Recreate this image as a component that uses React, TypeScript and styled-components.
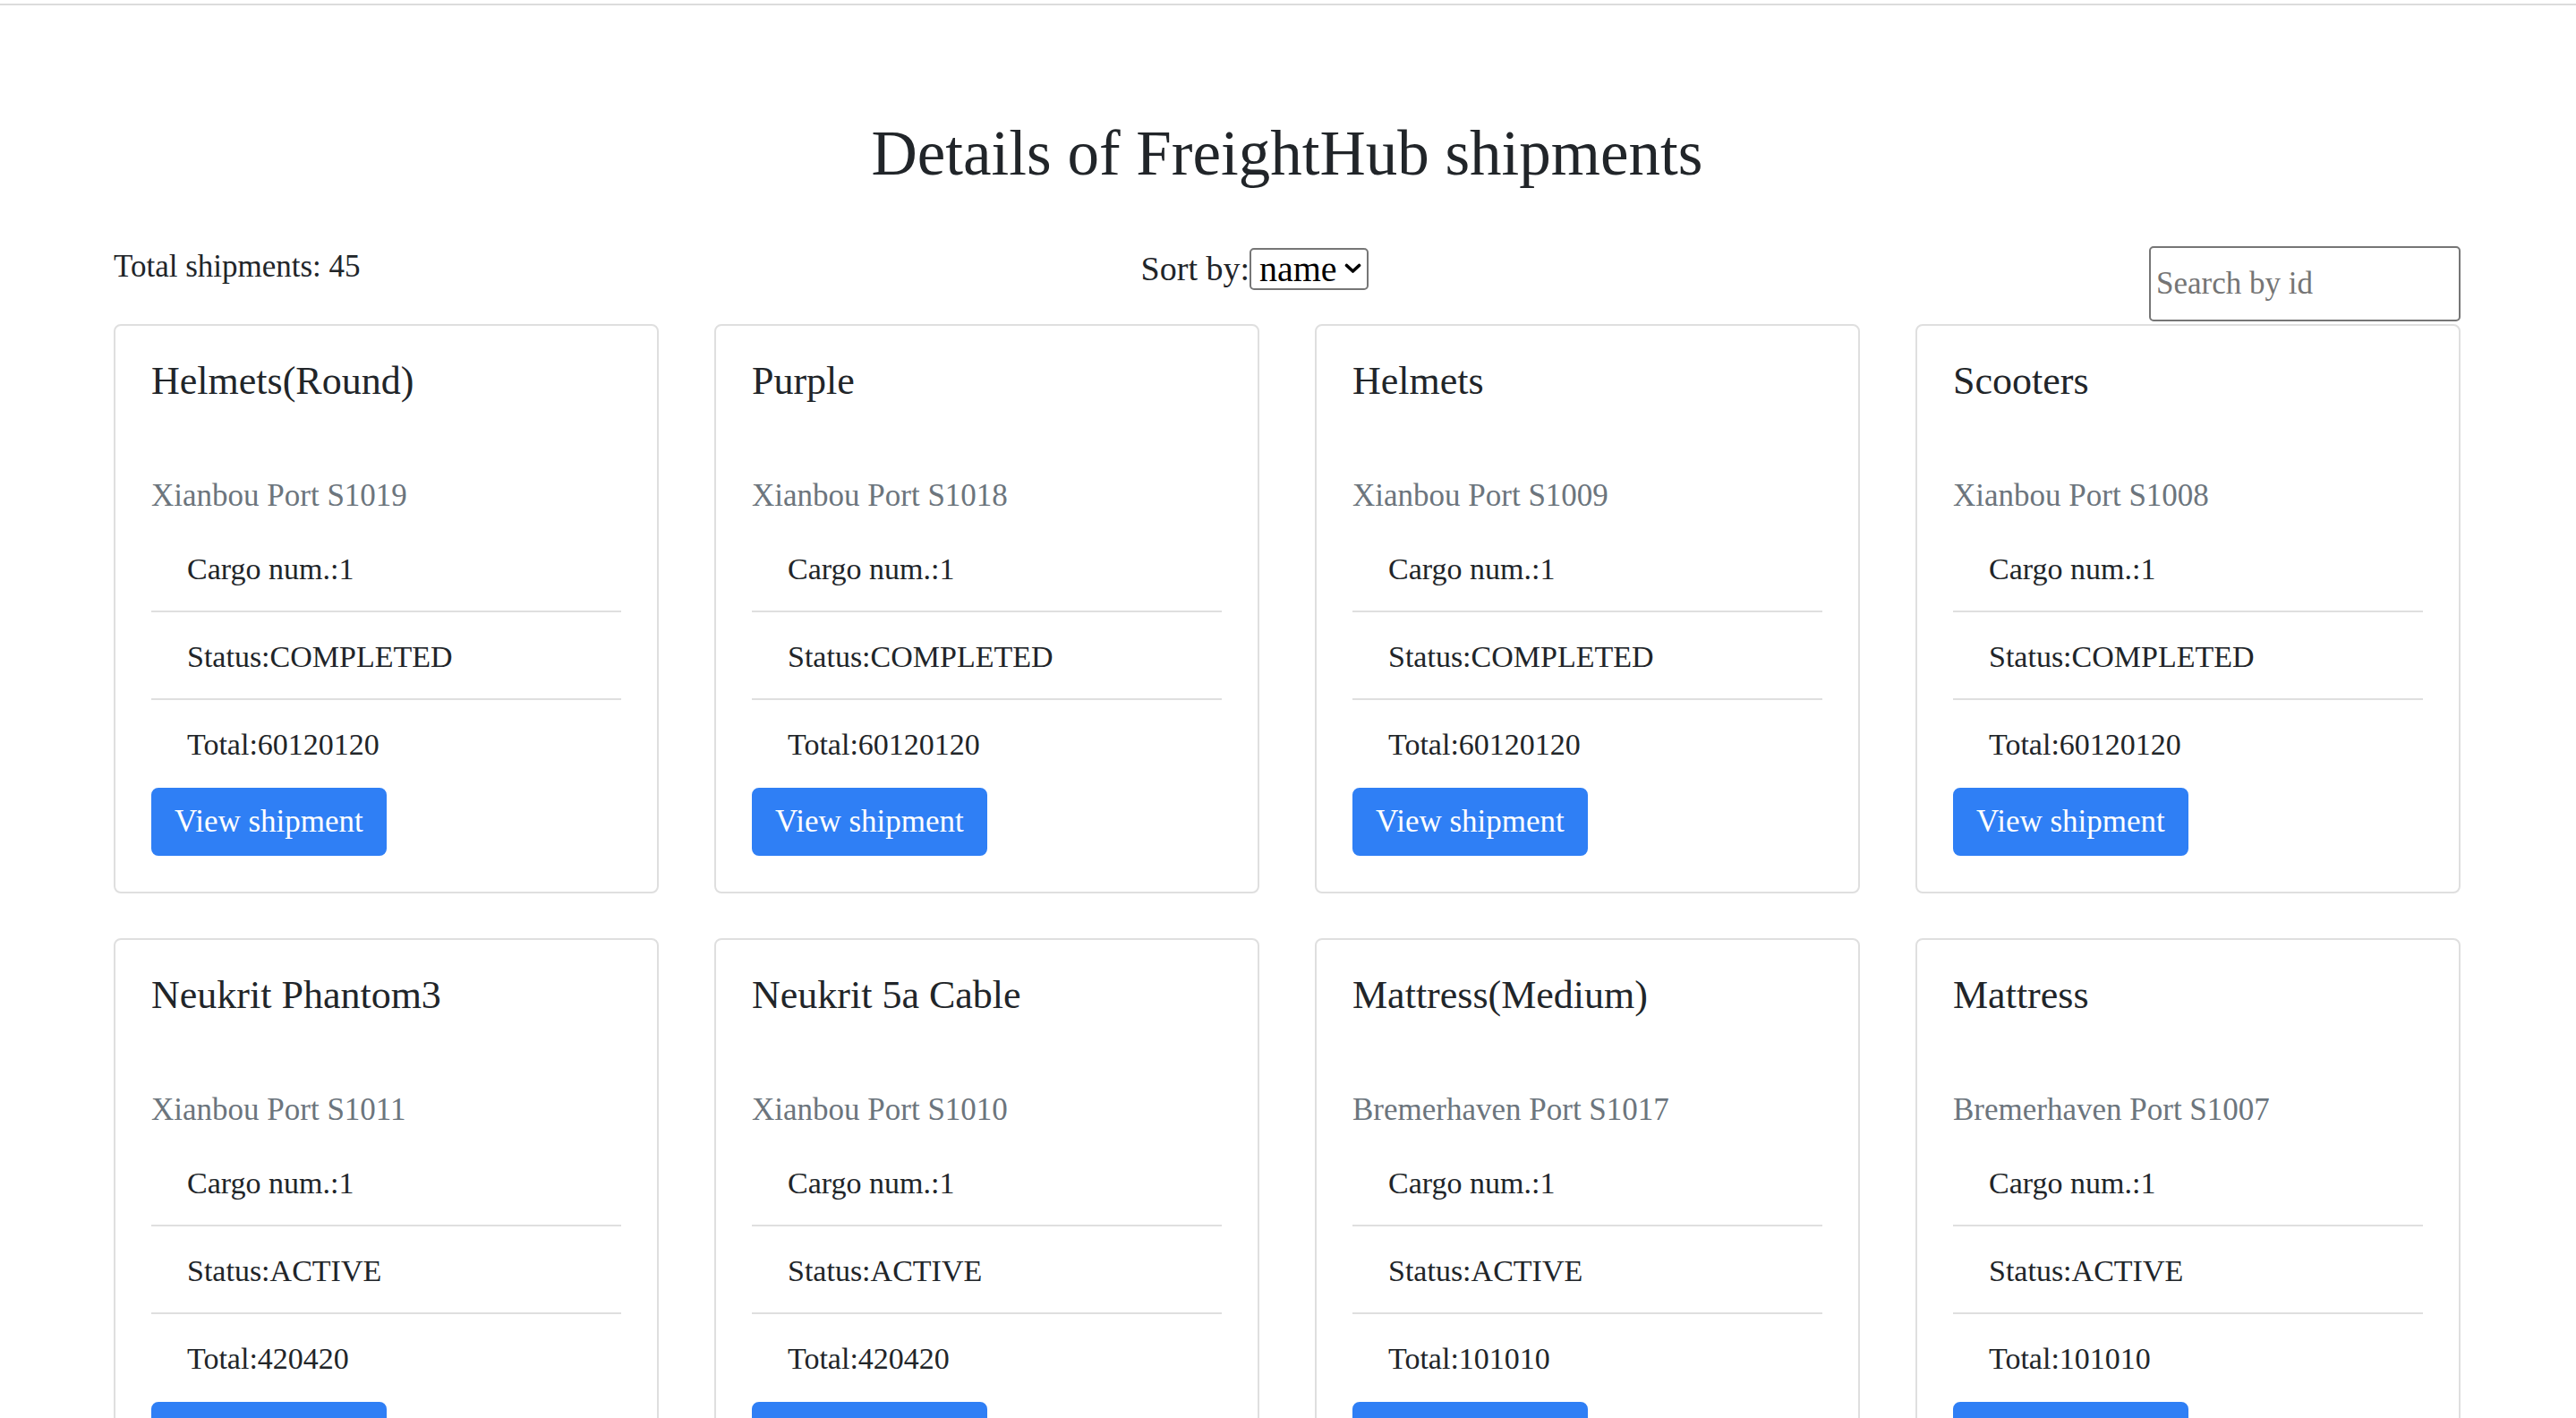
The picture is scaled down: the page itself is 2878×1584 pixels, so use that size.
import React from "react";
import styled, { createGlobalStyle } from "styled-components";

const GlobalStyle = createGlobalStyle`
  html, body {
    margin: 0;
    padding: 0;
    background: #ffffff;
  }
  body {
    font-family: "Liberation Serif", "Times New Roman", serif;
    color: #212529;
    font-size: 35px;
    line-height: 48px;
  }
  * { box-sizing: border-box; }
`;

const TopRule = styled.div`
  margin-top: 4px;
  height: 2px;
  background: #dcdcdc;
`;

const Page = styled.main`
  width: 2622px;
  margin: 0 auto;
  transform: translateX(-1px);
`;

const Title = styled.h2`
  margin: 127px 0 0;
  font-size: 71px;
  line-height: 77px;
  font-weight: 400;
  text-align: center;
  color: #212529;
`;

const Toolbar = styled.div`
  margin-top: 61px;
  display: flex;
  justify-content: space-between;
  align-items: flex-start;
`;

const TotalText = styled.div`
  padding-top: 3px;
  font-size: 35px;
  line-height: 48px;
`;

const SortGroup = styled.div`
  margin-top: 5px;
  display: flex;
  align-items: flex-start;
`;

const SortLabel = styled.label`
  font-size: 38px;
  line-height: 48px;
`;

const SelectWrap = styled.div`
  position: relative;
  margin-top: 1px;
`;

const Select = styled.select`
  appearance: none;
  -webkit-appearance: none;
  width: 133px;
  height: 47px;
  border: 2px solid #767676;
  border-radius: 5px;
  background: #ffffff;
  color: #000000;
  font-family: "Liberation Serif", "Times New Roman", serif;
  font-size: 40px;
  line-height: 43px;
  padding: 0 0 0 9px;
  margin: 0;
  outline: none;
`;

const Chevron = styled.svg`
  position: absolute;
  right: 8px;
  top: 17px;
  pointer-events: none;
`;

const SearchInput = styled.input`
  margin-top: 4px;
  width: 348px;
  height: 84px;
  border: 2px solid #767676;
  border-radius: 5px;
  padding: 0 6px;
  font-family: "Liberation Serif", "Times New Roman", serif;
  font-size: 35px;
  color: #212529;
  outline: none;
  &::placeholder {
    color: #757575;
  }
`;

const Grid = styled.section`
  margin-top: 3px;
  display: grid;
  grid-template-columns: repeat(4, 609px);
  column-gap: 62px;
  row-gap: 50px;
`;

const Card = styled.article`
  border: 2px solid #dfdfdf;
  border-radius: 8px;
  padding: 40px;
  background: #ffffff;
`;

const CardTitle = styled.h5`
  margin: 0;
  font-size: 44px;
  line-height: 44px;
  font-weight: 400;
  color: #212529;
`;

const CardSubtitle = styled.h6`
  margin: 87px 0 0;
  font-size: 35px;
  line-height: 38px;
  font-weight: 400;
  color: #6c757d;
`;

const List = styled.ul`
  margin: 13px 0 0;
  padding: 0;
  list-style: none;
`;

const ListItem = styled.li`
  padding: 26px 40px 22px;
  font-size: 34px;
  line-height: 48px;
  border-bottom: 2px solid #dfdfdf;
  &:last-child {
    border-bottom: 0;
  }
`;

const ViewButton = styled.button`
  margin-top: 2px;
  display: inline-block;
  padding: 12px 24px;
  border: 2px solid #2f7ff5;
  border-radius: 8px;
  background: #2f7ff5;
  color: #ffffff;
  font-family: "Liberation Serif", "Times New Roman", serif;
  font-size: 35px;
  line-height: 48px;
  cursor: pointer;
`;

type Shipment = {
  name: string;
  port: string;
  cargo: number;
  status: string;
  total: string;
};

const shipments: Shipment[] = [
  { name: "Helmets(Round)", port: "Xianbou Port S1019", cargo: 1, status: "COMPLETED", total: "60120120" },
  { name: "Purple", port: "Xianbou Port S1018", cargo: 1, status: "COMPLETED", total: "60120120" },
  { name: "Helmets", port: "Xianbou Port S1009", cargo: 1, status: "COMPLETED", total: "60120120" },
  { name: "Scooters", port: "Xianbou Port S1008", cargo: 1, status: "COMPLETED", total: "60120120" },
  { name: "Neukrit Phantom3", port: "Xianbou Port S1011", cargo: 1, status: "ACTIVE", total: "420420" },
  { name: "Neukrit 5a Cable", port: "Xianbou Port S1010", cargo: 1, status: "ACTIVE", total: "420420" },
  { name: "Mattress(Medium)", port: "Bremerhaven Port S1017", cargo: 1, status: "ACTIVE", total: "101010" },
  { name: "Mattress", port: "Bremerhaven Port S1007", cargo: 1, status: "ACTIVE", total: "101010" },
];

function ShipmentCard({ s }: { s: Shipment }) {
  return (
    <Card>
      <CardTitle>{s.name}</CardTitle>
      <CardSubtitle>{s.port}</CardSubtitle>
      <List>
        <ListItem>Cargo num.:{s.cargo}</ListItem>
        <ListItem>Status:{s.status}</ListItem>
        <ListItem>Total:{s.total}</ListItem>
      </List>
      <ViewButton type="button">View shipment</ViewButton>
    </Card>
  );
}

export default function App() {
  return (
    <>
      <GlobalStyle />
      <TopRule />
      <Page>
        <Title>Details of FreightHub shipments</Title>
        <Toolbar>
          <TotalText>Total shipments: 45</TotalText>
          <SortGroup>
            <SortLabel htmlFor="sort">Sort by:</SortLabel>
            <SelectWrap>
              <Select id="sort" defaultValue="name">
                <option value="name">name</option>
                <option value="id">id</option>
                <option value="status">status</option>
              </Select>
              <Chevron width="19" height="12" viewBox="0 0 19 12">
                <path d="M2.5 2.5 L9.5 9 L16.5 2.5" fill="none" stroke="#000" strokeWidth="3.6" strokeLinecap="round" strokeLinejoin="round" />
              </Chevron>
            </SelectWrap>
          </SortGroup>
          <SearchInput type="text" placeholder="Search by id" />
        </Toolbar>
        <Grid>
          {shipments.map((s) => (
            <ShipmentCard key={s.port} s={s} />
          ))}
        </Grid>
      </Page>
    </>
  );
}
